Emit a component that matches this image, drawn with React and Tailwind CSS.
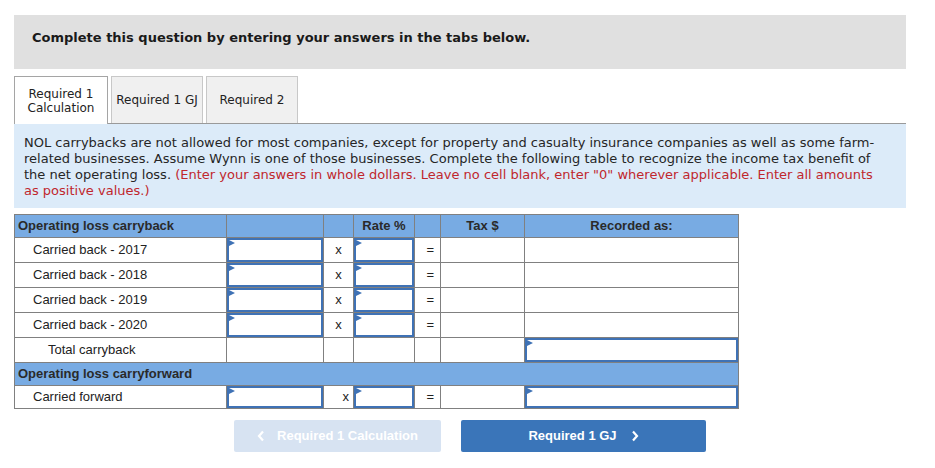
import React from 'react';

const verdana = "font-['DejaVu_Sans',Verdana,sans-serif]";
const arial = "font-['Liberation_Sans',Arial,sans-serif]";

function InputBox({ h = 'h-[24px]' }) {
  return (
    <div className={`relative ${h} w-full border-2 border-[#3f72b5] bg-white`}>
      <span className="absolute left-0 top-0 h-0 w-0 border-y-[3px] border-l-[6px] border-y-transparent border-l-[#3f72b5]" />
    </div>
  );
}

const td = 'border border-[#808080] p-0';

function YearRow({ year }) {
  return (
    <tr className="h-[25px]">
      <td className={`${td} pl-[18px]`}>Carried back - {year}</td>
      <td className={td}><InputBox /></td>
      <td className={`${td} text-center`}>x</td>
      <td className={td}><InputBox /></td>
      <td className={`${td} pr-[6px] text-right`}>=</td>
      <td className={td}></td>
      <td className={td}></td>
    </tr>
  );
}

export default function App() {
  return (
    <div className="min-h-screen bg-white pl-[14px] pt-[15px]">
      <div className={`h-[54px] w-[892px] bg-[#e0e0e0] pl-[18px] pt-[14px] text-[13px] font-bold leading-[18px] text-[#1a1a1a] ${verdana}`}>
        Complete this question by entering your answers in the tabs below.
      </div>

      {/* tabs */}
      <div className={`mt-[7px] flex gap-[3px] text-[12px] leading-[14px] text-[#222] ${verdana}`}>
        <div className="relative z-10 -mb-px flex h-[48px] w-[94px] items-center justify-center border border-b-0 border-[#a5a5a5] bg-white text-center">
          Required 1<br />Calculation
        </div>
        <div className="flex h-[47px] w-[92px] items-center justify-center border border-b-0 border-[#c8c8c8] bg-[#f0f0f0]">
          Required 1 GJ
        </div>
        <div className="flex h-[47px] w-[92px] items-center justify-center border border-b-0 border-[#c8c8c8] bg-[#f0f0f0]">
          Required 2
        </div>
      </div>

      <div className={`w-[892px] border-t border-[#9a9a9a] bg-[#dcebf9] pb-[9px] pl-[10px] pr-[22px] pt-[11px] text-[13px] leading-[16px] text-[#262626] ${verdana}`}>
        NOL carrybacks are not allowed for most companies, except for property and casualty insurance companies as well as some farm-related businesses. Assume Wynn is one of those businesses. Complete the following table to recognize the income tax benefit of the net operating loss.{' '}
        <span className="text-[#c0272d]">(Enter your answers in whole dollars. Leave no cell blank, enter "0" wherever applicable. Enter all amounts as positive values.)</span>
      </div>

      <table className={`mt-[6px] w-[724px] table-fixed border-collapse text-[13px] text-[#222] ${arial}`}>
        <colgroup>
          <col className="w-[212px]" />
          <col className="w-[97px]" />
          <col className="w-[30px]" />
          <col className="w-[61px]" />
          <col className="w-[26px]" />
          <col className="w-[84px]" />
          <col className="w-[214px]" />
        </colgroup>
        <tbody>
          <tr className="h-[23px] bg-[#78abe3] font-bold text-[#2a2a2a]">
            <td className={`${td} pl-[3px]`}>Operating loss carryback</td>
            <td className={td}></td>
            <td className={td}></td>
            <td className={`${td} text-center`}>Rate %</td>
            <td className={td}></td>
            <td className={`${td} text-center`}>Tax $</td>
            <td className={`${td} text-center`}>Recorded as:</td>
          </tr>
          <YearRow year="2017" />
          <YearRow year="2018" />
          <YearRow year="2019" />
          <YearRow year="2020" />
          <tr className="h-[25px]">
            <td className={`${td} pl-[33px]`}>Total carryback</td>
            <td className={td}></td>
            <td className={td}></td>
            <td className={td}></td>
            <td className={td}></td>
            <td className={td}></td>
            <td className={td}><InputBox /></td>
          </tr>
          <tr className="h-[23px] bg-[#78abe3] font-bold text-[#2a2a2a]">
            <td colSpan={7} className={`${td} pl-[3px]`}>Operating loss carryforward</td>
          </tr>
          <tr className="h-[23px]">
            <td className={`${td} pl-[18px]`}>Carried forward</td>
            <td className={td}><InputBox h="h-[22px]" /></td>
            <td className={`${td} pr-[4px] text-right`}>x</td>
            <td className={td}><InputBox h="h-[22px]" /></td>
            <td className={`${td} pr-[6px] text-right`}>=</td>
            <td className={td}></td>
            <td className={td}><InputBox h="h-[22px]" /></td>
          </tr>
        </tbody>
      </table>

      {/* nav buttons */}
      <div className={`mt-[11px] flex gap-[20px] pl-[220px] text-[13px] font-bold text-white ${arial}`}>
        <button className="flex h-[32px] w-[207px] items-center justify-center gap-[12px] rounded-[2px] bg-[#d7e3f2]">
          <svg width="8" height="12" viewBox="0 0 8 12" fill="none" stroke="white" strokeWidth="2.2">
            <polyline points="6,1.5 2,6 6,10.5" />
          </svg>
          Required 1 Calculation
        </button>
        <button className="flex h-[32px] w-[245px] items-center justify-center gap-[14px] rounded-[2px] bg-[#3a75b9]">
          Required 1 GJ
          <svg width="8" height="12" viewBox="0 0 8 12" fill="none" stroke="white" strokeWidth="2.2">
            <polyline points="2,1.5 6,6 2,10.5" />
          </svg>
        </button>
      </div>
    </div>
  );
}
